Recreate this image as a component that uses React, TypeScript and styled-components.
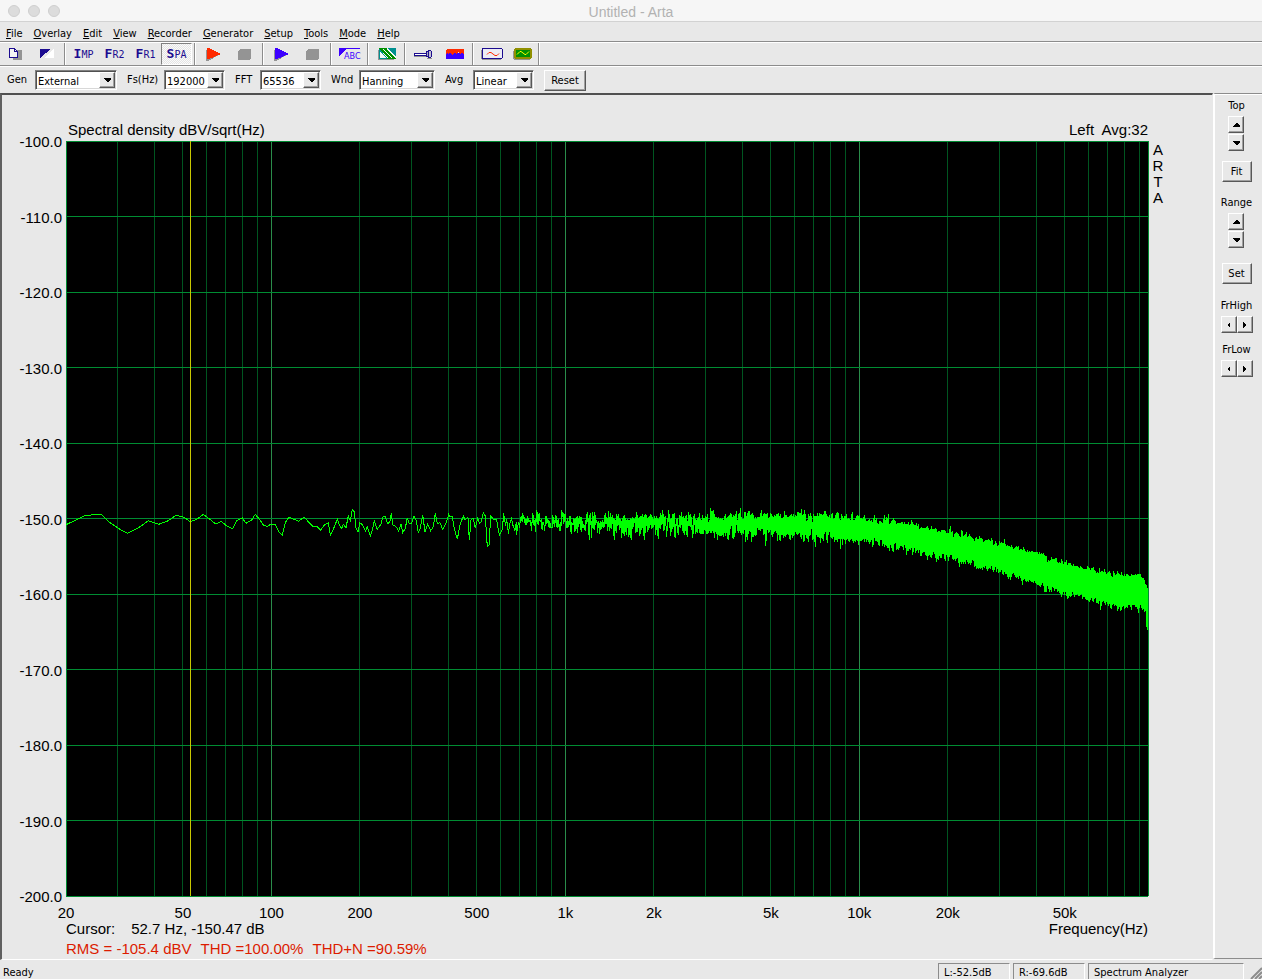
import React from 'react';
import styled, { createGlobalStyle, css } from 'styled-components';

const uiFont = '"DejaVu Sans Condensed", "DejaVu Sans", "Noto Sans", sans-serif';
const plotFont = '"Liberation Sans", Arial, sans-serif';

const Global = createGlobalStyle`
  * { box-sizing: border-box; }
  body { margin: 0; background: #e8e8e8; }
  button, select { font: inherit; color: inherit; border-radius: 0; }
`;

const raised = css`
  background: #e8e8e8;
  border: 1px solid;
  border-color: #ffffff #585858 #585858 #ffffff;
  box-shadow: inset -1px -1px 0 #a0a0a0;
`;

const Window = styled.div`
  display: flex;
  flex-direction: column;
  height: 100vh;
  min-height: 600px;
  background: #e8e8e8;
  color: #000;
  font: 11px/14px ${uiFont};
`;

const TitleBar = styled.header`
  position: relative;
  display: flex;
  align-items: center;
  justify-content: center;
  height: 22px;
  flex: none;
  padding-top: 2px;
  background: #f6f6f6;
  border-bottom: 1px solid #d2d2d2;
`;

const Title = styled.h1`
  margin: 0;
  color: #b2b2b2;
  font: 14px/18px ${plotFont};
`;

const Lights = styled.div`
  position: absolute;
  left: 8px;
  top: 5px;
  display: flex;
  gap: 8px;
`;

const Light = styled.button`
  width: 12px;
  height: 12px;
  padding: 0;
  border: 1px solid #cfcfcf;
  border-radius: 50%;
  background: #dcdcdc;
`;

const MenuBar = styled.nav`
  display: flex;
  align-items: center;
  gap: 11px;
  height: 20px;
  flex: none;
  padding: 4px 6px 0;
  border-bottom: 1px solid #8c8c8c;
`;

const MenuItem = styled.button`
  padding: 0;
  border: 0;
  background: none;
  &::first-letter { text-decoration: underline; }
`;

const ToolBar = styled.div`
  display: flex;
  height: 24px;
  flex: none;
  border-top: 1px solid #fff;
  border-bottom: 1px solid #8c8c8c;
`;

const Tool = styled.button<{ $on?: boolean }>`
  display: flex;
  align-items: center;
  justify-content: center;
  width: 31px;
  height: 22px;
  padding: 0;
  border: 0;
  background: none;
  ${(p) => p.$on && css`
    background: repeating-conic-gradient(#e4e4e4 0 25%, #fafafa 0 50%) 0 0 / 2px 2px;
    border: 1px solid;
    border-color: #808080 #fff #fff #808080;
  `}
`;

const Separator = styled.span`
  width: 2px;
  margin: 0 2px;
  border-left: 1px solid #8c8c8c;
  border-right: 1px solid #fff;
  &:last-child { margin: 0; }
`;

const Caption = styled.span`
  color: #1c0c90;
  font: 10px/14px "DejaVu Sans Mono", "Liberation Mono", monospace;
  b { font-size: 13px; }
`;

const Settings = styled.form`
  display: flex;
  align-items: center;
  gap: 10px;
  height: 27px;
  flex: none;
  padding: 2px 7px;
  border-top: 1px solid #fff;
`;

const Field = styled.div`
  display: flex;
  align-items: center;
`;

const FieldLabel = styled.label<{ $w: number }>`
  width: ${(p) => p.$w}px;
`;

const Combo = styled.div<{ $w: number }>`
  position: relative;
  width: ${(p) => p.$w}px;
  height: 20px;
  background: #fff;
  border: 1px solid;
  border-color: #808080 #fff #fff #808080;
  box-shadow: inset 1px 1px 0 #505050, inset -1px -1px 0 #d8d8d8;
  select {
    width: 100%;
    height: 18px;
    padding: 3px 18px 0 2px;
    border: 0;
    background: none;
    appearance: none;
  }
`;

const DropMark = styled.span`
  position: absolute;
  right: 1px;
  top: 1px;
  display: flex;
  align-items: center;
  justify-content: center;
  width: 16px;
  height: 16px;
  pointer-events: none;
  ${raised}
`;

const PushButton = styled.button<{ $w: number }>`
  width: ${(p) => p.$w}px;
  height: 21px;
  padding: 1px 0 0;
  ${raised}
`;

const Body = styled.div`
  display: flex;
  flex: 1;
  min-height: 0;
`;

const Chart = styled.main`
  display: grid;
  grid-template: 46px minmax(0, 1fr) 63px / 64px minmax(0, 1fr) 64px;
  flex: 1;
  min-width: 0;
  border: solid;
  border-width: 2px 1px 1px 2px;
  border-color: #505050 #e8e8e8 #fff #606060;
  font: 15px/20px ${plotFont};
`;

const ChartHead = styled.div`
  grid-column: 2;
  display: flex;
  justify-content: space-between;
  align-items: end;
  padding: 0 0 1px 2px;
  white-space: pre;
`;

const Plot = styled.svg`
  grid-area: 2 / 2;
  width: 100%;
  height: 100%;
  overflow: visible;
  font: 15px ${plotFont};
`;

const Brand = styled.div`
  grid-area: 2 / 3;
  display: flex;
  flex-direction: column;
  width: 20px;
  padding-top: 1px;
  text-align: center;
  line-height: 16px;
`;

const ChartFoot = styled.div`
  grid-area: 3 / 2;
  display: grid;
  grid-template-columns: 1fr auto;
  align-content: end;
  white-space: pre;
`;

const Cursor = styled.span`
  display: flex;
  gap: 16px;
`;

const Levels = styled.span`
  display: flex;
  gap: 9px;
  color: #dc1c00;
`;

const SidePanel = styled.aside`
  display: flex;
  flex-direction: column;
  align-items: center;
  width: 49px;
  flex: none;
  padding: 5px 4px 0 0;
  margin-bottom: 1px;
  border: solid;
  border-width: 1px 0 1px 2px;
  border-color: #8c8c8c #fff #8c8c8c #fff;
  box-shadow: inset 0 1px 0 #fff;
`;

const PanelGroup = styled.div<{ $after: number }>`
  display: flex;
  flex-direction: column;
  align-items: center;
  gap: 3px;
  margin-bottom: ${(p) => p.$after}px;
`;

const Spin = styled.div<{ $row?: boolean }>`
  display: flex;
  flex-direction: ${(p) => (p.$row ? 'row' : 'column')};
  gap: ${(p) => (p.$row ? 0 : 1)}px;
`;

const SpinButton = styled.button`
  display: flex;
  align-items: center;
  justify-content: center;
  width: 16px;
  height: 17px;
  padding: 0;
  ${raised}
`;

const StatusBar = styled.footer`
  display: flex;
  align-items: end;
  gap: 3px;
  height: 19px;
  flex: none;
  padding-left: 3px;
`;

const StatusMessage = styled.span`
  flex: 1;
  line-height: 13px;
`;

const StatusCell = styled.span<{ $w: number }>`
  width: ${(p) => p.$w}px;
  height: 16px;
  padding: 2px 5px 0;
  border: solid;
  border-width: 1px 1px 0 1px;
  border-color: #8c8c8c #fff #fff #8c8c8c;
`;

/* ---------- spectrum ---------- */

const W = 1082;
const H = 755;
const DECADE = W / Math.log10(96000 / 20);
const xOf = (f: number) => Math.log10(f / 20) * DECADE;
const pct = (v: number, total: number) => `${(v / total) * 100}%`;

// Resolved bins of the low range, three units to one plot unit.
const LOW = [
  0,134, 57,107, 82,104, 106,103, 132,128, 157,145, 184,160, 218,143, 247,122, 278,133, 307,122,
  330,106, 354,112, 373,125, 392,118, 412,103, 432,118, 449,132, 466,124, 482,138, 500,146, 512,122,
  529,114, 540,130, 557,120, 568,103, 582,120, 592,135, 604,139, 616,132, 628,133, 638,155, 649,165,
  658,128, 668,112, 682,117, 698,124, 714,111, 727,125, 740,138, 752,138, 764,151, 774,136, 787,128,
  793,165, 802,148, 814,118, 820,135, 827,145, 832,133, 840,143, 847,108, 853,122, 859,88, 865,95,
  870,145, 876,157, 881,128, 890,135, 899,154, 904,140, 913,169, 919,150, 925,122, 934,148, 944,134,
  952,108, 958,110, 964,130, 971,128, 976,100, 980,135, 990,140, 998,153, 1005,132, 1010,158,
  1018,145, 1024,113, 1030,132, 1037,130, 1044,107, 1050,120, 1057,157,
  1062,148, 1070,105, 1077,155, 1085,132, 1094,152, 1102,140, 1108,100, 1114,130, 1122,128,
  1130,148, 1140,130, 1148,103, 1152,110, 1158,108, 1165,145, 1174,178, 1182,135, 1192,108,
  1198,120, 1206,112, 1210,180, 1215,120, 1222,115, 1228,145, 1235,115, 1240,130, 1246,125,
  1252,98, 1258,108, 1264,200, 1269,195, 1274,108, 1282,118, 1292,120, 1300,165, 1308,150,
];

// Mean level of the noise floor: plot x, plot y.
const FLOOR = [
  [430, 382], [677, 383], [740, 384], [793, 388], [841, 394], [882, 403], [934, 415], [970, 426],
  [999, 436], [1022, 442], [1042, 447], [1059, 449], [1074, 447], [1078, 454], [1082, 467],
];

function floorAt(x: number) {
  let i = 1;
  while (i < FLOOR.length - 1 && FLOOR[i][0] < x) i++;
  const [x0, y0] = FLOOR[i - 1];
  const [x1, y1] = FLOOR[i];
  return y0 + ((x - x0) / (x1 - x0)) * (y1 - y0);
}

function buildTrace() {
  let d = '';
  for (let i = 0; i < LOW.length; i += 2) {
    d += `${i ? 'L' : 'M'}${(LOW[i] / 3).toFixed(1)} ${(339 + LOW[i + 1] / 3).toFixed(1)}`;
  }
  let seed = 20977;
  const rnd = () => {
    seed = (seed + 0x6d2b79f5) | 0;
    let t = Math.imul(seed ^ (seed >>> 15), 1 | seed);
    t = (t + Math.imul(t ^ (t >>> 7), 61 | t)) ^ t;
    return (((t ^ (t >>> 14)) >>> 0) + 1) / 4294967297;
  };
  const gauss = () => Math.sqrt(-2 * Math.log(rnd())) * Math.cos(2 * Math.PI * rnd());

  const bin = 192000 / 65536;
  let previous = gauss();
  let column = 437;
  let lo = Infinity;
  let hi = -Infinity;
  let last = 382;
  const flush = () => {
    if (lo > hi) return;
    const c = floorAt(column);
    const a = Math.abs(c + lo - last) < Math.abs(c + hi - last) ? lo : hi;
    const b = a === lo ? hi : lo;
    d += `L${column + 0.5} ${(c + a).toFixed(1)}`;
    if (a !== b) d += `V${(c + b).toFixed(1)}`;
    last = c + b;
  };
  for (let f = 20 * Math.pow(10, column / DECADE); f < 95990; f += bin) {
    const x = Math.floor(xOf(f));
    if (x !== column) {
      flush();
      column = x;
      lo = Infinity;
      hi = -Infinity;
    }
    const g = gauss();
    const n = (g + 0.5 * previous) / 1.118;
    previous = g;
    const v = 5.7 * (n + 0.04 * (n * n - 1));
    lo = Math.min(lo, v);
    hi = Math.max(hi, v);
  }
  flush();
  return d;
}

const TRACE = buildTrace();

const FREQS: number[] = [];
for (const base of [10, 100, 1000, 10000]) {
  for (let m = 1; m < 10; m++) if (base * m > 20) FREQS.push(base * m);
}
const TICKS: [number, string][] = [
  [20, '20'], [50, '50'], [100, '100'], [200, '200'], [500, '500'], [1000, '1k'],
  [2000, '2k'], [5000, '5k'], [10000, '10k'], [20000, '20k'], [50000, '50k'],
];
const LEVELS = Array.from({ length: 11 }, (_, i) => -100 - i * 10);

function Spectrum() {
  return (
    <Plot role="img" aria-label="Spectral density from 20 Hz to 96 kHz">
      <rect width="100%" height="100%" fill="#000" />
      <g shapeRendering="crispEdges">
        {FREQS.map((f) => {
          const x = pct(xOf(f), W);
          const major = f === 100 || f === 1000 || f === 10000;
          return <line key={f} x1={x} x2={x} y1="0" y2="100%" stroke={major ? '#2a8c4a' : '#005520'} />;
        })}
        {LEVELS.map((l, i) => (
          <line key={l} x1="0" x2="100%" y1={`${i * 10}%`} y2={`${i * 10}%`} stroke="#008c32" />
        ))}
        <line x1="0" x2="0" y1="0" y2="100%" stroke="#008c32" />
        <line x1="100%" x2="100%" y1="0" y2="100%" stroke="#008c32" />
      </g>
      <svg width="100%" height="100%" viewBox={`0 0 ${W} ${H}`} preserveAspectRatio="none">
        <path d={TRACE} fill="none" stroke="#00ff00" shapeRendering="crispEdges" vectorEffect="non-scaling-stroke" />
      </svg>
      <line x1={pct(xOf(52.9), W)} x2={pct(xOf(52.9), W)} y1="0" y2="100%" stroke="#c8c800" shapeRendering="crispEdges" />
      {LEVELS.map((l, i) => (
        <text key={l} x="-4" y={`${i * 10}%`} dy="6" textAnchor="end">{l.toFixed(1)}</text>
      ))}
      {TICKS.map(([f, label]) => (
        <text key={f} x={pct(xOf(f), W)} y="100%" dy="22" textAnchor="middle">{label}</text>
      ))}
    </Plot>
  );
}

/* ---------- icons ---------- */

const navy = '#1c0c90';
const blue = '#3c00ff';

function Icon({ w, h, children }: { w: number; h: number; children: React.ReactNode }) {
  return (
    <svg width={w} height={h} viewBox={`0 0 ${w} ${h}`} shapeRendering="crispEdges" aria-hidden="true">
      {children}
    </svg>
  );
}

const NewIcon = () => (
  <Icon w={14} h={12}>
    <path d="M4 2h9v10H4z" fill="#949494" />
    <path d="M.5.5h5l3 3v6h-8z" fill="#f4f4f4" stroke={navy} />
    <path d="M5.500 0v3.500h3" fill="none" stroke={navy} />
  </Icon>
);
const InvertIcon = () => (
  <Icon w={14} h={10}>
    <path d="M14 0v9H4z" fill="#fff" />
    <path d="M0 0h11L0 9z" fill={navy} />
  </Icon>
);
const PlayIcon = ({ color }: { color: string }) => (
  <Icon w={15} h={13}>
    <path d="M0 2h2l11 5L2 13H0z" fill="#949494" />
    <path d="M1 0h2l12 6L3 11H1z" fill={color} />
  </Icon>
);
const StopIcon = () => (
  <Icon w={13} h={11}>
    <path d="M2 0h11v9l-2 2H0V2z" fill="#949494" />
  </Icon>
);
const PatternIcon = () => (
  <Icon w={18} h={12}>
    <path d="M0 2h16v10H0z" fill="#949494" />
    <path d="M1 0h17v11H1z" fill="#f4f8f6" />
    <path d="M9 0h9v9z" fill="#009090" />
    <path d="M1.500 2v8.500h8z" fill="#f4f8f6" stroke="#009090" />
    <path d="M2 0l11 11M6 0l11 11" fill="none" stroke="#009000" strokeWidth="2" />
    <path d="M1 .5h8M9 10.500h9" stroke="#009000" />
  </Icon>
);
const JackIcon = () => (
  <Icon w={19} h={9}>
    <path d="M0 6h12v1H0zM13 8h5v1h-5z" fill="#949494" />
    <path d="M0 3h12v3H0z" fill={navy} />
    <path d="M1 4h11v1H1z" fill="#fff" />
    <path d="M12.500 1.500h3v5h-3z" fill="#a8a8b8" stroke={navy} />
    <path d="M14.500 .5h2l1 1v5l-1 1h-2z" fill="#c0c0d0" stroke={navy} />
  </Icon>
);
const WaterfallIcon = () => (
  <Icon w={18} h={10}>
    <path d="M0 4h18v6H0z" fill={blue} />
    <path d="M1 0h16l1 1v5l-2-3-1 2h-1l-2-2-1 3-1-1-1-2-2 3h-1l-2-3-1 2-2-1-1 2H0V1z" fill="#ff2a00" />
  </Icon>
);
const ScopeIcon = () => (
  <Icon w={22} h={12}>
    <path d="M0 2h20v10H1l-1-1z" fill="#949494" />
    <path d="M1.500 .5h19l1 1v8l-1 1h-19z" fill="#ececf4" stroke={navy} />
    <path d="M6 6.500l2-2h2l4 3h2l2-2" fill="none" stroke="#ff2a00" strokeWidth="1" shapeRendering="auto" />
  </Icon>
);
const AnalyzerIcon = () => (
  <Icon w={20} h={12}>
    <path d="M0 3h2v8h15v1H1l-1-1z" fill="#949494" />
    <path d="M2 0h16v1h1v9h-1v1H2v-1H1V1h1z" fill="#909000" />
    <path d="M3 2h14v7H3z" fill="#009000" />
    <path d="M4 6.500l3-3h1l4 3h1l3-3" fill="none" stroke="#ffff00" shapeRendering="auto" />
  </Icon>
);
const MarkIcon = styled.span`
  display: block;
  width: 21px;
  height: 13px;
  padding-left: 5px;
  background: linear-gradient(135deg, ${blue} 5px, transparent 5px);
  border-top: 1px solid ${blue};
  color: ${blue};
  font: 9px/14px ${uiFont};
`;

const arrows = {
  up: 'M3 0h1l3 3v1H0V3z',
  down: 'M0 0h7v1L4 4H3L0 1z',
  left: 'M3 0v6L0 3z',
  right: 'M0 0v6l3-3z',
};
const Arrow = ({ dir }: { dir: keyof typeof arrows }) => (
  <Icon w={dir === 'up' || dir === 'down' ? 7 : 3} h={dir === 'up' || dir === 'down' ? 4 : 6}>
    <path d={arrows[dir]} />
  </Icon>
);

/* ---------- page ---------- */

const MENUS = ['File', 'Overlay', 'Edit', 'View', 'Recorder', 'Generator', 'Setup', 'Tools', 'Mode', 'Help'];

const SETTINGS = [
  { id: 'gen', label: 'Gen', value: 'External', labelWidth: 28, width: 82 },
  { id: 'fs', label: 'Fs(Hz)', value: '192000', labelWidth: 37, width: 61 },
  { id: 'fft', label: 'FFT', value: '65536', labelWidth: 25, width: 61 },
  { id: 'wnd', label: 'Wnd', value: 'Hanning', labelWidth: 28, width: 76 },
  { id: 'avg', label: 'Avg', value: 'Linear', labelWidth: 28, width: 61 },
];

const MODES = [['I', 'MP'], ['F', 'R2'], ['F', 'R1'], ['S', 'PA']];

function Stepper({ name, row }: { name: string; row?: boolean }) {
  return (
    <Spin $row={row}>
      <SpinButton aria-label={`${name} ${row ? 'left' : 'up'}`}><Arrow dir={row ? 'left' : 'up'} /></SpinButton>
      <SpinButton aria-label={`${name} ${row ? 'right' : 'down'}`}><Arrow dir={row ? 'right' : 'down'} /></SpinButton>
    </Spin>
  );
}

export default function App() {
  return (
    <Window>
      <Global />
      <TitleBar>
        <Lights>
          <Light aria-label="Close" />
          <Light aria-label="Minimize" />
          <Light aria-label="Zoom" />
        </Lights>
        <Title>Untitled - Arta</Title>
      </TitleBar>
      <MenuBar>
        {MENUS.map((m) => <MenuItem key={m}>{m}</MenuItem>)}
      </MenuBar>
      <ToolBar role="toolbar">
        <Tool aria-label="New"><NewIcon /></Tool>
        <Tool aria-label="Invert colors"><InvertIcon /></Tool>
        <Separator />
        {MODES.map(([a, b]) => (
          <Tool key={a + b} $on={a === 'S'}><Caption><b>{a}</b>{b}</Caption></Tool>
        ))}
        <Separator />
        <Tool aria-label="Start recording"><PlayIcon color="#ff2a00" /></Tool>
        <Tool aria-label="Stop recording"><StopIcon /></Tool>
        <Separator />
        <Tool aria-label="Start generator"><PlayIcon color={blue} /></Tool>
        <Tool aria-label="Stop generator"><StopIcon /></Tool>
        <Separator />
        <Tool><MarkIcon>ABC</MarkIcon></Tool>
        <Separator />
        <Tool aria-label="Colors"><PatternIcon /></Tool>
        <Separator />
        <Tool aria-label="Input devices"><JackIcon /></Tool>
        <Tool aria-label="Spectrum scaling"><WaterfallIcon /></Tool>
        <Separator />
        <Tool aria-label="Time record"><ScopeIcon /></Tool>
        <Tool aria-label="Oscilloscope"><AnalyzerIcon /></Tool>
        <Separator />
      </ToolBar>
      <Settings onSubmit={(e) => e.preventDefault()}>
        {SETTINGS.map((s) => (
          <Field key={s.id}>
            <FieldLabel htmlFor={s.id} $w={s.labelWidth}>{s.label}</FieldLabel>
            <Combo $w={s.width}>
              <select id={s.id} defaultValue={s.value}><option>{s.value}</option></select>
              <DropMark><Arrow dir="down" /></DropMark>
            </Combo>
          </Field>
        ))}
        <PushButton type="button" $w={42}>Reset</PushButton>
      </Settings>
      <Body>
        <Chart>
          <ChartHead>
            <span>Spectral density dBV/sqrt(Hz)</span>
            <span>Left  Avg:32</span>
          </ChartHead>
          <Spectrum />
          <Brand>{['A', 'R', 'T', 'A'].map((c, i) => <span key={i}>{c}</span>)}</Brand>
          <ChartFoot>
            <Cursor><span>Cursor:</span><span>52.7 Hz, -150.47 dB</span></Cursor>
            <span>Frequency(Hz)</span>
            <Levels>
              <span>RMS = -105.4 dBV</span>
              <span>THD =100.00%</span>
              <span>THD+N =90.59%</span>
            </Levels>
          </ChartFoot>
        </Chart>
        <SidePanel>
          <PanelGroup $after={10}><span>Top</span><Stepper name="Top" /></PanelGroup>
          <PanelGroup $after={14}><PushButton $w={30}>Fit</PushButton></PanelGroup>
          <PanelGroup $after={15}><span>Range</span><Stepper name="Range" /></PanelGroup>
          <PanelGroup $after={15}><PushButton $w={30}>Set</PushButton></PanelGroup>
          <PanelGroup $after={10}><span>FrHigh</span><Stepper name="FrHigh" row /></PanelGroup>
          <PanelGroup $after={0}><span>FrLow</span><Stepper name="FrLow" row /></PanelGroup>
        </SidePanel>
      </Body>
      <StatusBar>
        <StatusMessage>Ready</StatusMessage>
        <StatusCell $w={72}>L:-52.5dB</StatusCell>
        <StatusCell $w={72}>R:-69.6dB</StatusCell>
        <StatusCell $w={156}>Spectrum Analyzer</StatusCell>
        <svg width="15" height="15" viewBox="0 0 15 15" aria-hidden="true">
          <path d="M4 15L15 4M8 15l7-7M12 15l3-3" stroke="#8c8c8c" strokeWidth="2" />
        </svg>
      </StatusBar>
    </Window>
  );
}
